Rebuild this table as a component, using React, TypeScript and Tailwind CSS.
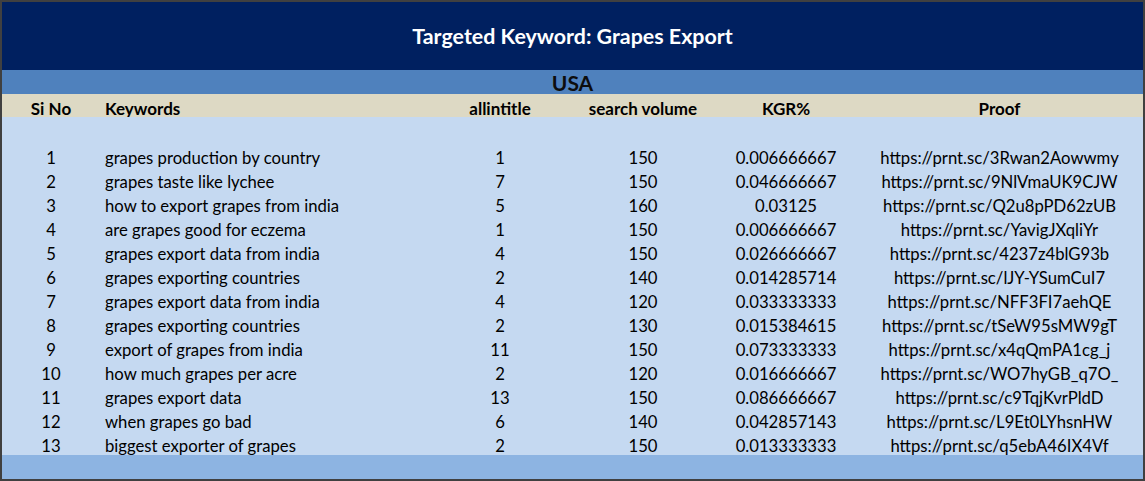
const rows: [string, string, string, string, string][] = [
  ["grapes production by country", "1", "150", "0.006666667", "https://prnt.sc/3Rwan2Aowwmy"],
  ["grapes taste like lychee", "7", "150", "0.046666667", "https://prnt.sc/9NlVmaUK9CJW"],
  ["how to export grapes from india", "5", "160", "0.03125", "https://prnt.sc/Q2u8pPD62zUB"],
  ["are grapes good for eczema", "1", "150", "0.006666667", "https://prnt.sc/YavigJXqliYr"],
  ["grapes export data from india", "4", "150", "0.026666667", "https://prnt.sc/4237z4blG93b"],
  ["grapes exporting countries", "2", "140", "0.014285714", "https://prnt.sc/lJY-YSumCuI7"],
  ["grapes export data from india", "4", "120", "0.033333333", "https://prnt.sc/NFF3FI7aehQE"],
  ["grapes exporting countries", "2", "130", "0.015384615", "https://prnt.sc/tSeW95sMW9gT"],
  ["export of grapes from india", "11", "150", "0.073333333", "https://prnt.sc/x4qQmPA1cg_j"],
  ["how much grapes per acre", "2", "120", "0.016666667", "https://prnt.sc/WO7hyGB_q7O_"],
  ["grapes export data", "13", "150", "0.086666667", "https://prnt.sc/c9TqjKvrPldD"],
  ["when grapes go bad", "6", "140", "0.042857143", "https://prnt.sc/L9Et0LYhsnHW"],
  ["biggest exporter of grapes", "2", "150", "0.013333333", "https://prnt.sc/q5ebA46IX4Vf"],
];

const cols = "grid grid-cols-[98px_330px_140px_146px_140px_287px]";

export default function App() {
  return (
    <div className="w-[1145px] h-[481px] border-2 border-[#404040] flex flex-col font-['Lato',sans-serif] text-[16.7px] text-black leading-none">
      <div className="h-[69px] bg-[#002060] flex items-center justify-center pt-[1px]">
        <h1 className="text-white font-bold text-[21.4px]">Targeted Keyword: Grapes Export</h1>
      </div>
      <div className="h-[24px] bg-[#4f81bd] flex items-center justify-center pt-[1px]">
        <span className="font-bold text-[21px] text-[#0d0d0d]">USA</span>
      </div>
      <div className={`${cols} h-[24px] bg-[#ddd9c4] font-bold text-[17px] items-center pt-[6px]`}>
        <div className="text-center">Si No</div>
        <div className="pl-[5px]">Keywords</div>
        <div className="text-center">allintitle</div>
        <div className="text-center">search volume</div>
        <div className="text-center">KGR%</div>
        <div className="text-center">Proof</div>
      </div>
      <div className="flex-1 bg-[#c5d9f1] pt-[26px]">
        {rows.map((r, i) => (
          <div key={i} className={`${cols} h-[24px] items-center pt-[5px]`}>
            <div className="text-center">{i + 1}</div>
            <div className="pl-[5px]">{r[0]}</div>
            <div className="text-center">{r[1]}</div>
            <div className="text-center">{r[2]}</div>
            <div className="text-center">{r[3]}</div>
            <div className="text-center">{r[4]}</div>
          </div>
        ))}
      </div>
      <div className="h-[24px] bg-[#8db4e2]" />
    </div>
  );
}
